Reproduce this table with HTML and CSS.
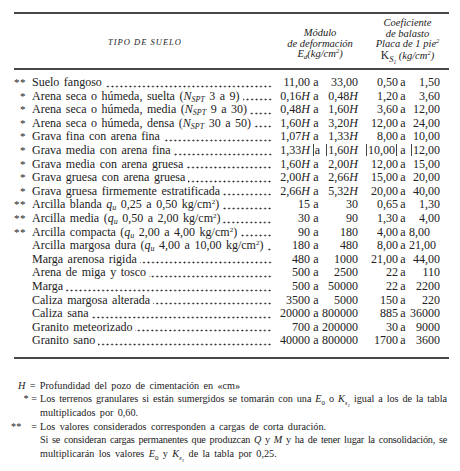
FILE: index.html
```html
<!DOCTYPE html>
<html lang="es">
<head>
<meta charset="utf-8">
<title>Tipo de suelo</title>
<link rel="stylesheet" href="styles.css">
</head>
<body>
<div class="page">
  <div class="table">
    <div class="head">
      <div class="h-tipo">TIPO DE SUELO</div>
      <div class="h-mod">Módulo<br>de deformación<br>E<sub>d</sub>(kg/cm<sup>2</sup>)</div>
      <div class="h-coef">Coeficiente<br>de balasto<br>Placa de 1 pie<sup>2</sup><br><span class="k">K<sub>S<sub>1</sub></sub></span> (kg/cm<sup>2</sup>)</div>
    </div>
    <div class="body">
      <div class="row"><span class="mark">**</span><span class="name"><span class="txt">Suelo fangoso</span><span class="dots"></span></span><span class="n1">11,00</span><span class="a">a</span><span class="n2">33,00</span><span class="c1">0,50</span><span class="a">a</span><span class="c2">1,50</span></div>
      <div class="row"><span class="mark">*</span><span class="name"><span class="txt">Arena seca o húmeda, suelta (<i>N<sub>SPT</sub></i> 3 a 9)</span><span class="dots"></span></span><span class="n1">0,16<i>H</i></span><span class="a">a</span><span class="n2">0,48<i>H</i></span><span class="c1">1,20</span><span class="a">a</span><span class="c2">3,60</span></div>
      <div class="row"><span class="mark">*</span><span class="name"><span class="txt">Arena seca o húmeda, media (<i>N<sub>SPT</sub></i> 9 a 30)</span><span class="dots"></span></span><span class="n1">0,48<i>H</i></span><span class="a">a</span><span class="n2">1,60<i>H</i></span><span class="c1">3,60</span><span class="a">a</span><span class="c2">12,00</span></div>
      <div class="row"><span class="mark">*</span><span class="name"><span class="txt">Arena seca o húmeda, densa (<i>N<sub>SPT</sub></i> 30 a 50)</span><span class="dots"></span></span><span class="n1">1,60<i>H</i></span><span class="a">a</span><span class="n2">3,20<i>H</i></span><span class="c1">12,00</span><span class="a">a</span><span class="c2">24,00</span></div>
      <div class="row"><span class="mark">*</span><span class="name"><span class="txt">Grava fina con arena fina</span><span class="dots"></span></span><span class="n1">1,07<i>H</i></span><span class="a">a</span><span class="n2">1,33<i>H</i></span><span class="c1">8,00</span><span class="a">a</span><span class="c2">10,00</span></div>
      <div class="row"><span class="mark">*</span><span class="name"><span class="txt">Grava media con arena fina</span><span class="dots"></span></span><span class="n1">1,33<i>H</i></span><span class="a"><span class="bar"></span>a</span><span class="n2"><span class="bar"></span>1,60<i>H</i></span><span class="c1"><span class="bar"></span>10,00<span class="bar"></span></span><span class="a">a</span><span class="c2"><span class="bar"></span>12,00</span></div>
      <div class="row"><span class="mark">*</span><span class="name"><span class="txt">Grava media con arena gruesa</span><span class="dots"></span></span><span class="n1">1,60<i>H</i></span><span class="a">a</span><span class="n2">2,00<i>H</i></span><span class="c1">12,00</span><span class="a">a</span><span class="c2">15,00</span></div>
      <div class="row"><span class="mark">*</span><span class="name"><span class="txt">Grava gruesa con arena gruesa</span><span class="dots"></span></span><span class="n1">2,00<i>H</i></span><span class="a">a</span><span class="n2">2,66<i>H</i></span><span class="c1">15,00</span><span class="a">a</span><span class="c2">20,00</span></div>
      <div class="row"><span class="mark">*</span><span class="name"><span class="txt">Grava gruesa firmemente estratificada</span><span class="dots"></span></span><span class="n1">2,66<i>H</i></span><span class="a">a</span><span class="n2">5,32<i>H</i></span><span class="c1">20,00</span><span class="a">a</span><span class="c2">40,00</span></div>
      <div class="row"><span class="mark">**</span><span class="name"><span class="txt">Arcilla blanda <i>q<sub>u</sub></i> 0,25 a 0,50 kg/cm<sup>2</sup>)</span><span class="dots"></span></span><span class="n1">15</span><span class="a">a</span><span class="n2">30</span><span class="c1">0,65</span><span class="a">a</span><span class="c2">1,30</span></div>
      <div class="row"><span class="mark">**</span><span class="name"><span class="txt">Arcilla media (<i>q<sub>u</sub></i> 0,50 a 2,00 kg/cm<sup>2</sup>)</span><span class="dots"></span></span><span class="n1">30</span><span class="a">a</span><span class="n2">90</span><span class="c1">1,30</span><span class="a">a</span><span class="c2">4,00</span></div>
      <div class="row loose"><span class="mark">**</span><span class="name"><span class="txt">Arcilla compacta (<i>q<sub>u</sub></i> 2,00 a 4,00 kg/cm<sup>2</sup>)</span><span class="dots"></span></span><span class="n1">90</span><span class="a">a</span><span class="n2">180</span><span class="c1">4,00</span><span class="a">a</span><span class="c2">8,00</span></div>
      <div class="row loose"><span class="mark"></span><span class="name"><span class="txt">Arcilla margosa dura (<i>q<sub>u</sub></i> 4,00 a 10,00 kg/cm<sup>2</sup>)</span><span class="dots"></span></span><span class="n1">180</span><span class="a">a</span><span class="n2">480</span><span class="c1">8,00</span><span class="a">a</span><span class="c2">21,00</span></div>
      <div class="row"><span class="mark"></span><span class="name"><span class="txt">Marga arenosa rigida</span><span class="dots"></span></span><span class="n1">480</span><span class="a">a</span><span class="n2">1000</span><span class="c1">21,00</span><span class="a">a</span><span class="c2">44,00</span></div>
      <div class="row"><span class="mark"></span><span class="name"><span class="txt">Arena de miga y tosco</span><span class="dots"></span></span><span class="n1">500</span><span class="a">a</span><span class="n2">2500</span><span class="c1">22</span><span class="a">a</span><span class="c2">110</span></div>
      <div class="row"><span class="mark"></span><span class="name"><span class="txt">Marga</span><span class="dots"></span></span><span class="n1">500</span><span class="a">a</span><span class="n2">50000</span><span class="c1">22</span><span class="a">a</span><span class="c2">2200</span></div>
      <div class="row"><span class="mark"></span><span class="name"><span class="txt">Caliza margosa alterada</span><span class="dots"></span></span><span class="n1">3500</span><span class="a">a</span><span class="n2">5000</span><span class="c1">150</span><span class="a">a</span><span class="c2">220</span></div>
      <div class="row"><span class="mark"></span><span class="name"><span class="txt">Caliza sana</span><span class="dots"></span></span><span class="n1">20000</span><span class="a">a</span><span class="n2">800000</span><span class="c1">885</span><span class="a">a</span><span class="c2">36000</span></div>
      <div class="row"><span class="mark"></span><span class="name"><span class="txt">Granito meteorizado</span><span class="dots"></span></span><span class="n1">700</span><span class="a">a</span><span class="n2">200000</span><span class="c1">30</span><span class="a">a</span><span class="c2">9000</span></div>
      <div class="row"><span class="mark"></span><span class="name"><span class="txt">Granito sano</span><span class="dots"></span></span><span class="n1">40000</span><span class="a">a</span><span class="n2">800000</span><span class="c1">1700</span><span class="a">a</span><span class="c2">3600</span></div>
    </div>
  </div>
  <div class="notes">
    <p class="note-h"><i>H</i> = Profundidad del pozo de cimentación en «cm»</p>
    <div class="note"><span class="lbl">*&nbsp;=</span><div class="ntext"><span class="line full">Los terrenos granulares si están sumergidos se tomarán con una <i>E</i><sub>0</sub> o <i>K<sub>s<sub>1</sub></sub></i> igual a los de la tabla</span><span class="line">multiplicados por 0,60.</span></div></div>
    <div class="note"><span class="lbl"><span class="st2">**</span>=</span><div class="ntext"><span class="line">Los valores considerados corresponden a cargas de corta duración.</span><span class="line full tight">Si se consideran cargas permanentes que produzcan <i>Q</i> y <i>M</i> y ha de tener lugar la consolidación, se</span><span class="line">multiplicarán los valores <i>E</i><sub>0</sub> y <i>K<sub>s<sub>1</sub></sub></i> de la tabla por 0,25.</span></div></div>
  </div>
</div>
</body>
</html>
```
FILE: styles.css
```css
html, body {
  margin: 0;
  padding: 0;
  background: #fff;
}
body {
  font-family: "Liberation Serif", "Times New Roman", serif;
  color: #222;
}
.page {
  width: 460px;
  height: 471px;
  padding-top: 12px;
  box-sizing: border-box;
  overflow: hidden;
}
.table {
  margin-left: 14px;
  width: 435px;
  border-top: 2px solid #484848;
  border-bottom: 2px solid #484848;
}
.head {
  display: grid;
  grid-template-columns: 262px 82px 91px;
  height: 54px;
  border-bottom: 2px solid #484848;
  font-style: italic;
  font-size: 10.5px;
  line-height: 10.8px;
  align-items: center;
  text-align: center;
}
.h-tipo {
  font-size: 8.5px;
  letter-spacing: 1px;
  padding-top: 2px;
}
.h-mod {
  padding-top: 6px;
  padding-left: 6px;
}
.h-coef {
  padding-left: 8px;
  padding-bottom: 2px;
}
.head sup { font-size: 6.5px; vertical-align: 4px; line-height: 0; }
.head sub { font-size: 7px; vertical-align: -2px; line-height: 0; }
.k { font-style: normal; font-size: 11.5px; }
.k sub { font-style: italic; font-size: 8.5px; vertical-align: -3px; }
.k sub sub { font-size: 5.5px; vertical-align: -2px; }

.body {
  padding: 6px 0 9px;
}
.row {
  display: grid;
  grid-template-columns: 18px 244px 34px 12px 36px 40px 10px 32px;
  font-size: 12px;
  line-height: 13.6px;
  height: 13.6px;
  white-space: nowrap;
  word-spacing: 1.5px;
}
.row i { font-style: italic; }
.row sub { font-size: 8px; vertical-align: -2px; line-height: 0; }
.row sup { font-size: 7px; vertical-align: 4px; line-height: 0; }
.mark {
  text-align: right;
  padding-right: 6px;
  font-size: 11px;
  letter-spacing: 0.5px;
}
.name {
  display: flex;
  min-width: 0;
  padding-right: 4px;
}
.txt { flex: none; }
.dots {
  flex: 1;
  margin-left: 3px;
  background-image: radial-gradient(circle, #2a2a2a 0.75px, transparent 1.15px);
  background-size: 4.5px 3px;
  background-repeat: repeat-x;
  background-position: right 0 bottom 2px;
}
.n1, .c1, .n2, .c2 { text-align: right; }
.a { text-align: center; }
.bar {
  display: inline-block;
  width: 1px;
  height: 12px;
  background: #444;
  vertical-align: -2px;
  margin: 0 1px;
}
.loose .c2 { text-align: left; padding-left: 1px; }

.notes {
  margin-top: 20px;
  font-size: 10.2px;
  line-height: 13.4px;
  word-spacing: 1.8px;
}
.notes p { margin: 0; }
.notes sub { font-size: 7px; vertical-align: -3px; line-height: 0; }
.notes sub sub { font-size: 5px; vertical-align: -2px; }
.note-h { padding-left: 18px; }
.note {
  display: grid;
  grid-template-columns: 40px 407px;
}
.lbl {
  text-align: right;
  padding-right: 3px;
  white-space: nowrap;
  word-spacing: 0;
}
.st2 { margin-right: 10px; }
.ntext { display: flex; flex-direction: column; }
.line { display: block; white-space: nowrap; }
.line.full {
  white-space: normal;
  text-align: justify;
  text-align-last: justify;
  word-spacing: 0;
}
.line.tight { word-spacing: -1px; letter-spacing: -0.2px; }
```
